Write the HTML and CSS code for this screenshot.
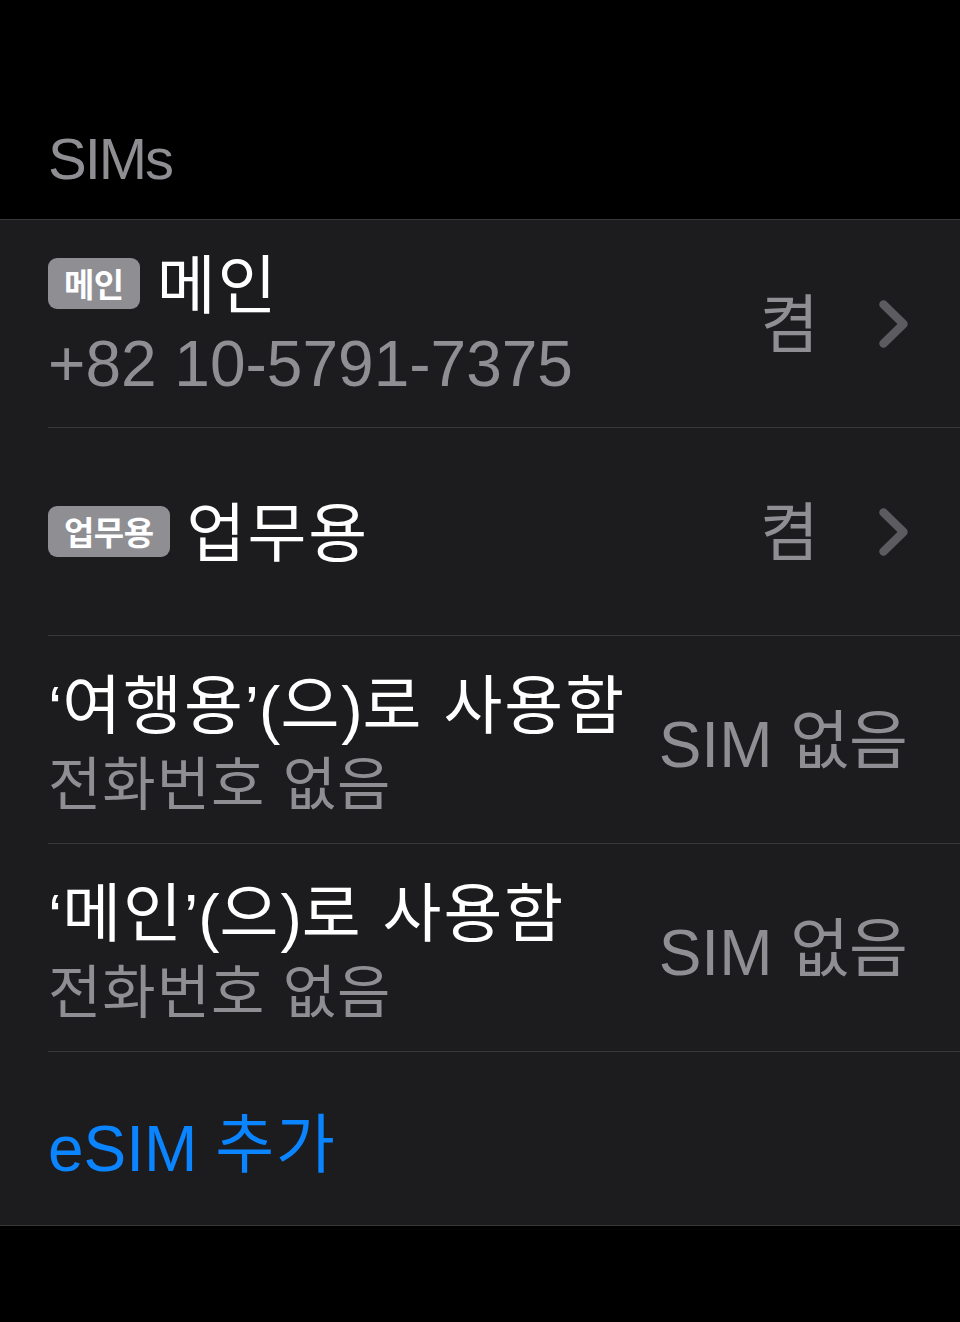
FILE: index.html
```html
<!DOCTYPE html>
<html lang="ko">
<head>
<meta charset="utf-8">
<title>SIMs</title>
<link rel="stylesheet" href="styles.css">
</head>
<body>
<main class="screen">
  <header class="section-header">SIMs</header>
  <section class="group">
    <div class="row">
      <div class="row-inner">
        <div class="text">
          <div class="title"><span class="badge">메인</span><span class="k">메인</span></div>
          <div class="sub">+82 10-5791-7375</div>
        </div>
        <span class="value k">켬</span>
        <svg class="chevron" viewBox="0 0 29 48" aria-hidden="true"><path d="M4.5 4.5 L24.5 24 L4.5 43.5"/></svg>
      </div>
    </div>
    <div class="row">
      <div class="row-inner">
        <div class="text">
          <div class="title"><span class="badge">업무용</span><span class="k">업무용</span></div>
        </div>
        <span class="value k">켬</span>
        <svg class="chevron" viewBox="0 0 29 48" aria-hidden="true"><path d="M4.5 4.5 L24.5 24 L4.5 43.5"/></svg>
      </div>
    </div>
    <div class="row">
      <div class="row-inner">
        <div class="text">
          <div class="title mixed">‘<span class="k">여행용</span>’(<span class="k">으</span>)<span class="k">로 사용함</span></div>
          <div class="sub"><span class="k">전화번호 없음</span></div>
        </div>
        <span class="value">SIM <span class="k">없음</span></span>
      </div>
    </div>
    <div class="row">
      <div class="row-inner">
        <div class="text">
          <div class="title mixed">‘<span class="k">메인</span>’(<span class="k">으</span>)<span class="k">로 사용함</span></div>
          <div class="sub"><span class="k">전화번호 없음</span></div>
        </div>
        <span class="value">SIM <span class="k">없음</span></span>
      </div>
    </div>
    <div class="row">
      <div class="row-inner">
        <div class="text">
          <div class="title mixed add">eSIM <span class="k">추가</span></div>
        </div>
      </div>
    </div>
  </section>
</main>
</body>
</html>
```
FILE: styles.css
```css
* {
  box-sizing: border-box;
}

body {
  margin: 0;
  background: #000;
  color: #fff;
  font-family: "Liberation Sans", "Noto Sans CJK KR", sans-serif;
}

.screen {
  width: 960px;
  min-height: 1322px;
  background: #000;
}

.section-header {
  height: 219px;
  padding: 130px 0 0 48px;
  font-size: 58px;
  line-height: 58px;
  letter-spacing: -2px;
  color: #8e8e93;
}

.group {
  background: #1c1c1e;
  border-top: 1px solid #38383a;
  border-bottom: 1px solid #38383a;
}

.row {
  padding-left: 48px;
}

.row-inner {
  display: flex;
  align-items: center;
  height: 208px;
  padding-right: 52px;
  border-bottom: 1px solid #38383a;
}

.row:last-child .row-inner {
  height: 173px;
  border-bottom: none;
}

.text {
  flex: 1;
  min-width: 0;
}

.title {
  display: flex;
  align-items: center;
  height: 80px;
  font-size: 64px;
  line-height: 80px;
  white-space: nowrap;
}

.title.mixed {
  display: block;
}

.k {
  font-family: "Noto Sans CJK KR", sans-serif;
  font-size: 64px;
  letter-spacing: 2px;
  vertical-align: 4px;
}

.title > .k {
  margin-bottom: 8px;
}

.badge {
  display: inline-flex;
  align-items: center;
  height: 51px;
  padding: 0 16px;
  margin-right: 17px;
  border-radius: 9px;
  background: #8e8e93;
  color: #fff;
  font-family: "Noto Sans CJK KR", sans-serif;
  font-size: 33px;
  font-weight: 700;
  line-height: 51px;
  letter-spacing: -0.5px;
}

.sub {
  height: 80px;
  font-size: 64px;
  line-height: 80px;
  color: #8e8e93;
  white-space: nowrap;
}

.sub .k {
  font-size: 58px;
  letter-spacing: 1px;
}

.value {
  flex: none;
  font-size: 64px;
  line-height: 80px;
  color: #8e8e93;
  white-space: nowrap;
}

.value .k {
  letter-spacing: 0;
}

.value.k {
  margin-bottom: 10px;
  letter-spacing: 0;
}

.chevron {
  flex: none;
  width: 29px;
  height: 48px;
  margin-left: 60px;
}

.chevron path {
  fill: none;
  stroke: #5b5b60;
  stroke-width: 8.5;
  stroke-linecap: round;
  stroke-linejoin: round;
}

.add {
  color: #0a84ff;
}
```
